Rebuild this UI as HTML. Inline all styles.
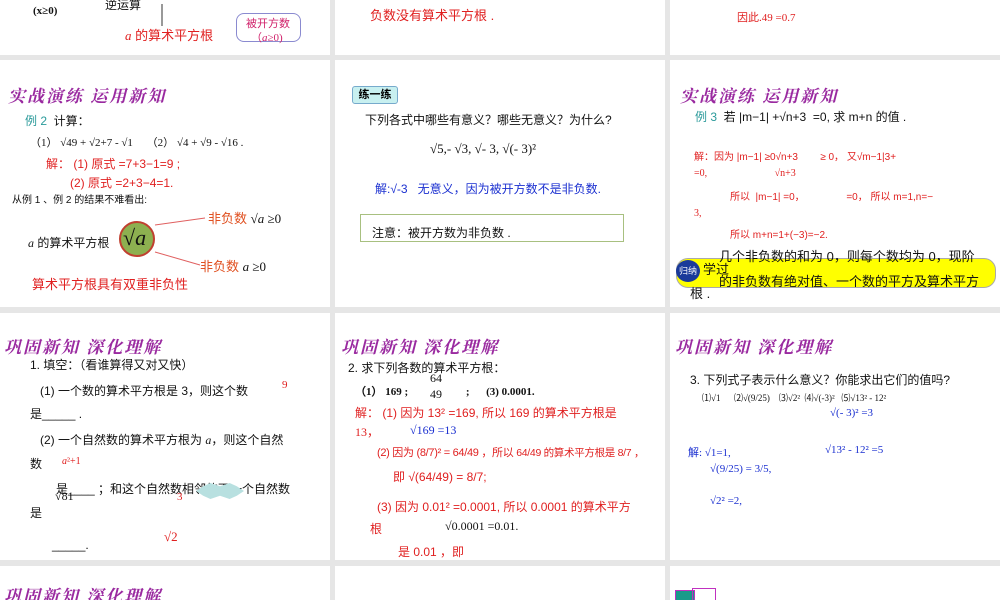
<!DOCTYPE html>
<html><head><meta charset="utf-8"><style>
*{margin:0;padding:0;box-sizing:border-box}
body{width:1000px;height:600px;background:#e6e6e6;position:relative;overflow:hidden;font-family:"Liberation Sans","Noto Sans CJK SC",sans-serif;}
.p{position:absolute;background:#fff;overflow:hidden}
.t{position:absolute;white-space:nowrap;font-size:12px;color:#111}
.r{color:#e02020}.b{color:#1a2fd0}.tl{color:#2a9a9a}
.h{position:absolute;font-family:"Noto Serif CJK SC","Liberation Serif",serif;font-style:italic;color:#9a2aa0;font-size:17px;letter-spacing:2px;font-weight:bold}
.s{font-family:"Liberation Serif",serif}
</style></head><body>
<div class="p" style="left:0;top:0;width:330px;height:55px">
<div class="t s" style="left:33px;top:5px;font-size:11px;font-weight:bold">(x≥0)</div>
<div class="t" style="left:105px;top:-4px">逆运算</div>
<div style="position:absolute;left:161px;top:4px;width:2px;height:22px;background:#999"></div>
<div class="t r" style="left:125px;top:25px;font-size:13px"><i class="s">a</i> 的算术平方根</div>
<div style="position:absolute;left:236px;top:13px;width:65px;height:29px;border:1px solid #8a8ad0;border-radius:8px"></div>
<div class="t" style="left:246px;top:15px;font-size:11px;color:#d0206a">被开方数</div>
<div class="t s" style="left:251px;top:29px;font-size:11px;color:#d0206a">（<i>a</i>≥0)</div>
</div>
<div class="p" style="left:335px;top:0;width:330px;height:55px">
<div class="t r" style="left:35px;top:5px;font-size:13px">负数没有算术平方根 .</div>
</div>
<div class="p" style="left:670px;top:0;width:330px;height:55px">
<div class="t r s" style="left:67px;top:9px;font-size:11px">因此.49 =0.7</div>
</div>
<div class="p" style="left:0;top:60px;width:330px;height:247px">
<div class="h" style="left:8px;top:22px">实战演练 运用新知</div>
<div class="t" style="left:25px;top:52px"><span class="tl">例 2</span>&nbsp; 计算：</div>
<div class="t s" style="left:30px;top:74px;font-size:11px">（1） √49 + √2+7 - √1 &nbsp;&nbsp;&nbsp;&nbsp;（2） √4 + √9 - √16 .</div>
<div class="t r" style="left:46px;top:95px">解： (1) 原式 =7+3−1=9 ;</div>
<div class="t r" style="left:70px;top:114px">(2) 原式 =2+3−4=1.</div>
<div class="t" style="left:12px;top:131px;font-size:10px">从例 1 、例 2 的结果不难看出:</div>
<div class="t" style="left:28px;top:174px"><i class="s">a</i> 的算术平方根</div>
<div style="position:absolute;left:119px;top:161px;width:36px;height:36px;border-radius:50%;background:#8db050;border:2px solid #c04030"></div>
<div class="t s" style="left:123px;top:165px;font-size:22px"><i>√a</i></div>
<svg style="position:absolute;left:150px;top:150px" width="60" height="60"><path d="M5 15 L55 8 M5 42 L50 55" stroke="#e06060" fill="none"/></svg>
<div class="t" style="left:208px;top:148px;color:#e05020;font-size:13px">非负数 <span class="s" style="color:#111">√<i>a</i> ≥0</span></div>
<div class="t" style="left:200px;top:196px;color:#e05020;font-size:13px">非负数 <span class="s" style="color:#111"><i>a</i> ≥0</span></div>
<div class="t r" style="left:32px;top:214px;font-size:13px">算术平方根具有双重非负性</div>
</div>
<div class="p" style="left:335px;top:60px;width:330px;height:247px">
<div style="position:absolute;left:17px;top:26px;width:46px;height:18px;background:#c8f0f0;border:1px solid #7ac;border-radius:3px;font-size:11px;font-weight:bold;text-align:center;line-height:16px">练一练</div>
<div class="t" style="left:30px;top:51px">下列各式中哪些有意义？哪些无意义？为什么?</div>
<div class="t s" style="left:95px;top:81px;font-size:13px">√5,- √3, √- 3, √(- 3)²</div>
<div class="t b" style="left:40px;top:120px">解:√-3 &nbsp; 无意义，因为被开方数不是非负数.</div>
<div style="position:absolute;left:25px;top:154px;width:264px;height:28px;border:1px solid #a8c080"></div>
<div class="t" style="left:37px;top:164px">注意：被开方数为非负数 .</div>
</div>
<div class="p" style="left:670px;top:60px;width:330px;height:247px">
<div class="h" style="left:10px;top:22px">实战演练 运用新知</div>
<div class="t" style="left:25px;top:48px"><span class="tl">例 3</span>&nbsp; 若 |m−1| +√n+3 &nbsp;=0, 求 m+n 的值 .</div>
<div class="t r" style="left:24px;top:88px;font-size:10px">解：因为 |m−1| ≥0√n+3 &nbsp;&nbsp;&nbsp;&nbsp;&nbsp;&nbsp;&nbsp;≥ 0， 又√m−1|3+</div>
<div class="t r s" style="left:24px;top:108px;font-size:10px">=0, &nbsp;&nbsp;&nbsp;&nbsp;&nbsp;&nbsp;&nbsp;&nbsp;&nbsp;&nbsp;&nbsp;&nbsp;&nbsp;&nbsp;&nbsp;&nbsp;&nbsp;&nbsp;&nbsp;&nbsp;&nbsp;&nbsp;&nbsp;&nbsp;&nbsp;&nbsp;√n+3</div>
<div class="t r" style="left:60px;top:128px;font-size:10px">所以 &nbsp;|m−1| =0， &nbsp;&nbsp;&nbsp;&nbsp;&nbsp;&nbsp;&nbsp;&nbsp;&nbsp;&nbsp;&nbsp;&nbsp;&nbsp;&nbsp;=0， 所以 m=1,n=−</div>
<div class="t r s" style="left:24px;top:148px;font-size:10px">3,</div>
<div class="t r" style="left:60px;top:166px;font-size:10px">所以 m+n=1+(−3)=−2.</div>
<div style="position:absolute;left:6px;top:198px;width:320px;height:30px;background:#ffff00;border:1px solid #aaa;border-radius:12px"></div>
<div style="position:absolute;left:6px;top:200px;width:24px;height:22px;border-radius:50%;background:#1a3a9a;color:#fff;font-size:9px;text-align:center;line-height:22px">归纳</div>
<div class="t" style="left:49px;top:186px;font-size:13px">几个非负数的和为 0，则每个数均为 0，现阶</div>
<div class="t" style="left:33px;top:199px;font-size:13px">学过</div>
<div class="t" style="left:49px;top:211px;font-size:13px">的非负数有绝对值、一个数的平方及算术平方</div>
<div class="t" style="left:20px;top:223px;font-size:13px">根 .</div>
</div>
<div class="p" style="left:0;top:313px;width:330px;height:247px">
<div class="h" style="left:4px;top:20px">巩固新知 深化理解</div>
<div class="t" style="left:30px;top:43px">1. 填空：（看谁算得又对又快）</div>
<div class="t" style="left:40px;top:69px">(1) 一个数的算术平方根是 3，则这个数</div>
<div class="t r s" style="left:282px;top:66px;font-size:11px">9</div>
<div class="t" style="left:30px;top:92px">是_____ .</div>
<div class="t" style="left:40px;top:118px">(2) 一个自然数的算术平方根为 <i class="s">a</i>，则这个自然</div>
<div class="t" style="left:30px;top:142px">数</div>
<div class="t r s" style="left:62px;top:143px;font-size:10px"><i>a</i>²+1</div>
<div class="t" style="left:56px;top:167px">是____ ；和这个自然数相邻的下一个自然数</div>
<div class="t s" style="left:55px;top:176px">√81</div>
<div class="t r s" style="left:177px;top:178px;font-size:11px">3</div>
<div style="position:absolute;left:196px;top:170px;width:48px;height:16px;background:#b8e0e0;clip-path:polygon(0 50%,15% 20%,30% 0,50% 20%,70% 0,85% 20%,100% 50%,85% 80%,70% 100%,50% 80%,30% 100%,15% 80%)"></div>
<div class="t" style="left:30px;top:191px">是</div>
<div class="t r s" style="left:164px;top:216px;font-size:13px">√2</div>
<div class="t" style="left:52px;top:225px">_____.</div>
</div>
<div class="p" style="left:335px;top:313px;width:330px;height:247px">
<div class="h" style="left:6px;top:20px">巩固新知 深化理解</div>
<div class="t" style="left:13px;top:46px">2. 求下列各数的算术平方根：</div>
<div class="t s" style="left:20px;top:70px;font-size:11px;font-weight:bold">（1） 169 ; &nbsp;&nbsp;&nbsp;&nbsp;&nbsp;&nbsp;&nbsp;&nbsp;&nbsp;&nbsp;&nbsp;&nbsp;&nbsp;&nbsp;&nbsp;&nbsp;&nbsp;&nbsp;&nbsp;&nbsp;; &nbsp;&nbsp;&nbsp;&nbsp;&nbsp;(3) 0.0001.</div>
<div class="t s" style="left:95px;top:58px;font-size:12px">64</div>
<div class="t s" style="left:95px;top:74px;font-size:12px">49</div>
<div class="t r" style="left:20px;top:91px;font-size:12px">解： (1) 因为 13² =169, 所以 169 的算术平方根是</div>
<div class="t r s" style="left:20px;top:110px;font-size:12px">13，</div>
<div class="t b s" style="left:75px;top:110px;font-size:12px">√169 =13</div>
<div class="t r" style="left:42px;top:131px;font-size:11px;letter-spacing:-0.3px">(2) 因为 (8/7)² = 64/49 ，所以 <span style="font-size:10.5px">64/49 的算术平方根是 8/7 ，</span></div>
<div class="t r" style="left:58px;top:155px;font-size:12px">即 √(64/49) = 8/7;</div>
<div class="t r" style="left:42px;top:185px;font-size:12px">(3) 因为 0.01² =0.0001, 所以 0.0001 的算术平方</div>
<div class="t r" style="left:35px;top:207px;font-size:12px">根</div>
<div class="t s" style="left:110px;top:206px;font-size:12px">√0.0001 =0.01.</div>
<div class="t r" style="left:63px;top:230px;font-size:12px">是 0.01 ，即</div>
</div>
<div class="p" style="left:670px;top:313px;width:330px;height:247px">
<div class="h" style="left:5px;top:20px">巩固新知 深化理解</div>
<div class="t" style="left:20px;top:58px">3. 下列式子表示什么意义？你能求出它们的值吗?</div>
<div class="t s" style="left:32px;top:78px;font-size:9px">⑴√1 &nbsp;&nbsp;&nbsp;&nbsp;&nbsp;⑵√(9/25) &nbsp;&nbsp;&nbsp;⑶√2² &nbsp;⑷√(-3)² &nbsp;&nbsp;⑸√13² - 12²</div>
<div class="t b s" style="left:160px;top:94px;font-size:11px">√(- 3)² =3</div>
<div class="t b s" style="left:18px;top:131px;font-size:11px">解: √1=1,</div>
<div class="t b s" style="left:155px;top:131px;font-size:11px">√13² - 12² =5</div>
<div class="t b s" style="left:40px;top:150px;font-size:11px">√(9/25) = 3/5,</div>
<div class="t b s" style="left:40px;top:182px;font-size:11px">√2² =2,</div>
</div>
<div class="p" style="left:0;top:566px;width:330px;height:34px"><div class="h" style="left:4px;top:16px">巩固新知 深化理解</div></div>
<div class="p" style="left:335px;top:566px;width:330px;height:34px"></div>
<div class="p" style="left:670px;top:566px;width:330px;height:34px">
<div style="position:absolute;left:5px;top:24px;width:20px;height:12px;background:#1a9a8a;border:1px solid #c030c0"></div>
<div style="position:absolute;left:22px;top:22px;width:24px;height:14px;border:1px solid #c030c0"></div>
</div>
</body></html>
